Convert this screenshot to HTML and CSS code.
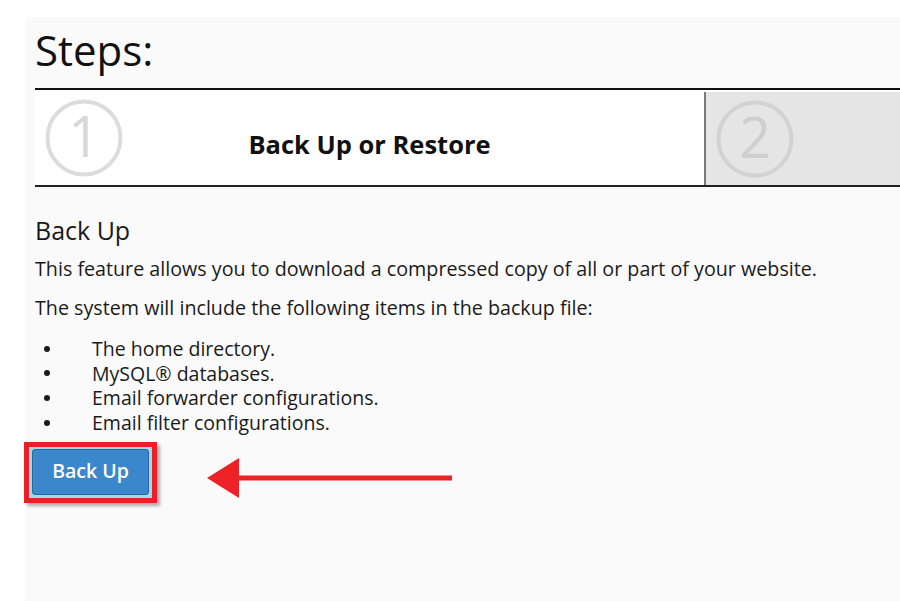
FILE: index.html
```html
<html lang="en">
<head>
  <meta charset="UTF-8">
  <meta name="viewport" content="width=device-width, initial-scale=1.0">
  <title>Backup Wizard</title>
  <link rel="stylesheet" href="styles.css">
</head>

<body>
  <div class="page">
    <h1>Steps:</h1>

    <div class="steps">
      <div class="step active">
        <svg class="step-num" width="80" height="80" viewBox="0 0 80 80">
          <circle cx="40" cy="40" r="36.5" fill="none" stroke="#dcdcdc" stroke-width="4"/>
          <text x="40" y="59" text-anchor="middle">1</text>
        </svg>
        <span class="step-title">Back Up or Restore</span>
      </div>
      <div class="step next">
        <svg class="step-num" width="80" height="80" viewBox="0 0 80 80">
          <circle cx="40" cy="40" r="36.5" fill="none" stroke="#d2d2d2" stroke-width="4"/>
          <text x="40" y="59" text-anchor="middle">2</text>
        </svg>
      </div>
    </div>

    <h2>Back Up</h2>
    <p>This feature allows you to download a compressed copy of all or part of your website.</p>
    <p>The system will include the following items in the backup file:</p>
    <ul class="items">
      <li>The home directory.</li>
      <li>MySQL® databases.</li>
      <li>Email forwarder configurations.</li>
      <li>Email filter configurations.</li>
    </ul>

    <div class="action">
      <div class="highlight">
        <button class="btn">Back Up</button>
      </div>
      <svg class="arrow" width="250" height="44" viewBox="0 0 250 44">
        <line x1="30" y1="22" x2="247" y2="22" stroke="#ee2226" stroke-width="5"/>
        <polygon points="2,22 34,2 34,42" fill="#ee2226"/>
      </svg>
    </div>
  </div>
</body>
</html>
```

FILE: styles.css
```css
body {
  margin: 0;
  background-color: #fff;
  font-family: "Open Sans", "Liberation Sans", sans-serif;
  color: #1a1a1a;
  overflow: hidden;
}

.page {
  margin: 17px 0 0 25px;
  padding: 4px 0 0 10px;
  min-height: calc(100vh - 21px);
  background-color: #fafafa;
}

h1 {
  margin: 0;
  font-size: 42px;
  font-weight: 400;
  line-height: 57px;
  color: #111;
}

/* Barra de passos */
.steps {
  display: flex;
  width: 900px;
  margin-top: 10px;
  border-top: 2px solid #111;
  border-bottom: 2px solid #222;
  background-color: #fff;
}

.step {
  height: 95px;
  box-sizing: border-box;
}

.step-num {
  margin-left: 9px;
}

.step.active {
  flex: 0 0 669px;
  display: grid;
  grid-template-columns: 1fr auto 1fr;
  align-items: center;
}

.step.next {
  flex: 1;
  display: flex;
  align-items: center;
  border-left: 2px solid #7a7a7a;
  margin-top: 2px;
  height: 93px;
  background-color: #e5e5e5;
}

.step-num text {
  font-family: "Open Sans", sans-serif;
  font-weight: 400;
  font-size: 56px;
  fill: #d8d8d8;
}

.step.next .step-num text {
  fill: #cfcfcf;
}

.step-title {
  grid-column: 2;
  padding-top: 12px;
  font-size: 25.5px;
  font-weight: 700;
  line-height: 34px;
  color: #111;
}

h2 {
  margin: 26px 0 9px;
  font-size: 25px;
  font-weight: 400;
  line-height: 34px;
}

p {
  margin: 0 0 13px;
  font-size: 19.7px;
  line-height: 26px;
}

.items {
  list-style: none;
  margin: 16px 0 0;
  padding: 0 0 0 9px;
  font-size: 19.5px;
  line-height: 24.7px;
}

.items li::before {
  content: "";
  display: inline-block;
  width: 6px;
  height: 6px;
  margin: 0 42px 4px 0;
  border-radius: 50%;
  background-color: #1a1a1a;
  vertical-align: middle;
}

/* Botão com destaque */
.action {
  display: flex;
  align-items: flex-start;
  margin: 6px 0 0 -11px;
}

.highlight {
  padding: 2px 3px 3px;
  border: 5px solid #ee1f24;
  background-color: #a3d9e4;
  box-shadow: 3px 3px 3px rgba(0, 0, 0, 0.3);
}

.btn {
  display: block;
  width: 117px;
  height: 46px;
  padding: 0 0 3px;
  border: 1px solid #2b68a2;
  border-radius: 3px;
  background-color: #3a87cc;
  color: #fff;
  font-family: "Open Sans", sans-serif;
  font-size: 19.5px;
  font-weight: 600;
  cursor: pointer;
}

.arrow {
  margin: 14px 0 0 48px;
}
```
